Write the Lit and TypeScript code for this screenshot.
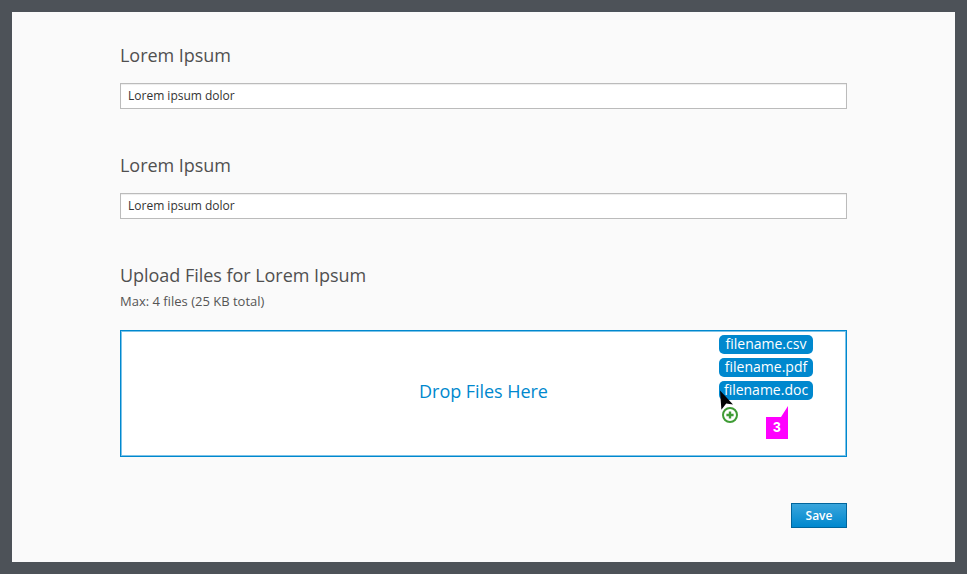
import { LitElement, html, css } from "lit";
import { customElement } from "lit/decorators.js";

@customElement("app-root")
export class AppRoot extends LitElement {
  static styles = css`
    :host {
      display: block;
      box-sizing: border-box;
      width: 967px;
      height: 574px;
      padding: 12px;
      background: #4d5258;
      font-family: "Open Sans", "Noto Sans", sans-serif;
      color: #505050;
    }
    * {
      box-sizing: border-box;
    }
    .page {
      height: 550px;
      padding: 31px 108px 0;
      background: #fafafa;
    }
    .field {
      height: 110px;
    }
    .title {
      margin: 0;
      font-size: 18px;
      font-weight: 400;
      line-height: 25px;
      letter-spacing: -0.04px;
    }
    .input {
      display: block;
      width: 100%;
      height: 26px;
      margin: 15px 0 0;
      padding: 0 7px 1px;
      border: 1px solid #bbb;
      border-radius: 0;
      background: #fff;
      box-shadow: inset 0 1px 1px rgba(3, 3, 3, 0.075);
      font: 12px/17px "Open Sans", "Noto Sans", sans-serif;
      color: #333;
      outline: none;
    }
    .hint {
      margin: 4px 0 0;
      font-size: 13px;
      line-height: 18px;
      color: #555;
    }
    .drop {
      position: relative;
      display: flex;
      align-items: center;
      justify-content: center;
      height: 127px;
      margin-top: 20px;
      border: 1px solid #0088ce;
      background: #fff;
      box-shadow: inset 0 0 0 1px #7dc3e8;
      font-size: 18px;
      color: #0088ce;
    }
    .prompt {
      line-height: 24px;
      margin-bottom: 5px;
      letter-spacing: -0.05px;
    }
    .files {
      position: absolute;
      left: 598px;
      top: 4px;
      display: flex;
      flex-direction: column;
      gap: 4px;
      width: 94px;
    }
    .file {
      height: 19px;
      border-radius: 5px;
      background: #0088ce;
      color: #fff;
      font-size: 14px;
      line-height: 18px;
      text-align: center;
      white-space: nowrap;
    }
    .cursor {
      position: absolute;
      left: 597px;
      top: 59px;
    }
    .note {
      position: absolute;
      left: 645px;
      top: 75px;
      width: 22px;
      height: 33px;
      padding-top: 11px;
      background: #f0f;
      clip-path: polygon(0 11px, 15px 11px, 22px 0, 22px 33px, 0 33px);
      color: #fff;
      font: bold 14px/20px "Liberation Sans", sans-serif;
      text-align: center;
    }
    .actions {
      display: flex;
      justify-content: flex-end;
      margin-top: 46px;
    }
    .save {
      width: 56px;
      height: 25px;
      padding: 0;
      border: 1px solid #00659c;
      border-radius: 0;
      background: linear-gradient(#39a5dc, #0088ce);
      color: #fff;
      font: 600 12px/22px "Open Sans", "Noto Sans", sans-serif;
    }
  `;

  render() {
    return html`
      <main class="page">
        ${[0, 1].map(
          () => html`
            <section class="field">
              <h2 class="title">Lorem Ipsum</h2>
              <input class="input" aria-label="Lorem Ipsum" .value=${"Lorem ipsum dolor"} />
            </section>
          `
        )}
        <section>
          <h2 class="title">Upload Files for Lorem Ipsum</h2>
          <p class="hint">Max: 4 files (25 KB total)</p>
          <div class="drop">
            <span class="prompt">Drop Files Here</span>
            <div class="files">
              ${["csv", "pdf", "doc"].map((ext) => html`<span class="file">filename.${ext}</span>`)}
            </div>
            <svg class="cursor" width="22" height="36" viewBox="0 0 22 36">
              <path d="M2 0.6 15 14.5 8.2 13.4 3.4 19.8Z" fill="#030303" />
              <circle cx="12" cy="25" r="7" fill="#fff" stroke="#3f9c35" stroke-width="2" />
              <path d="M12 21.4v7.2M8.4 25h7.2" stroke="#3f9c35" stroke-width="2.4" />
            </svg>
            <span class="note">3</span>
          </div>
        </section>
        <div class="actions"><button class="save">Save</button></div>
      </main>
    `;
  }
}
